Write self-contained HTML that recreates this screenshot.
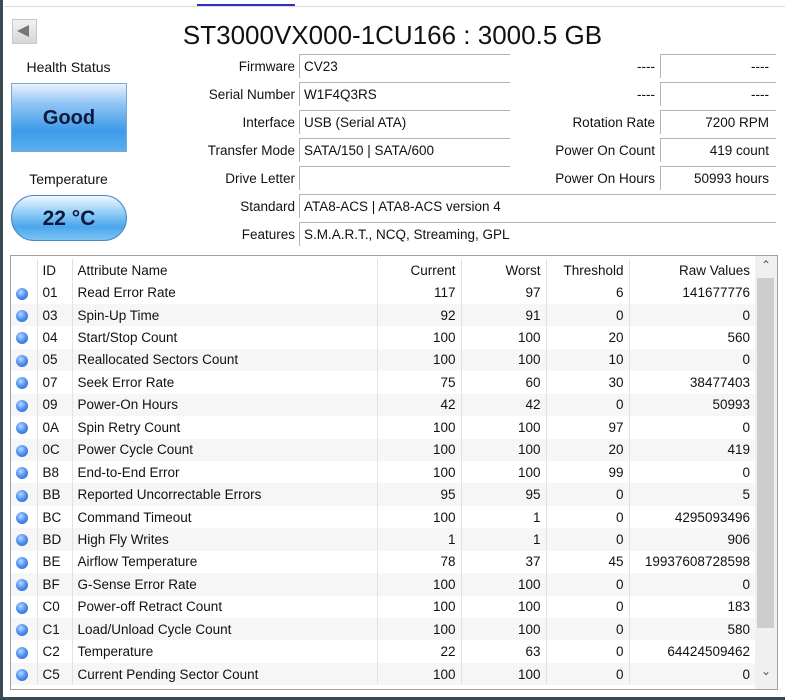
<!DOCTYPE html>
<html><head><meta charset="utf-8"><style>
*{margin:0;padding:0;box-sizing:border-box}
body{width:785px;height:700px;background:#fff;font-family:"Liberation Sans",sans-serif;font-size:13.5px;color:#111;position:relative;overflow:hidden}
.a{position:absolute;white-space:nowrap}
.lbl{text-align:right;line-height:24px}
.box{position:absolute;height:24px;border-top:1px solid #b4b4b4;border-left:1px solid #b4b4b4;line-height:24px;padding:0 4px;white-space:nowrap}
table{border-collapse:collapse;position:absolute;left:11px;top:259px;width:744px;table-layout:fixed}
td{height:22.45px;padding:0 5px;white-space:nowrap;border-left:1px solid #e2e2e2}
td:first-child{border-left:none}
tr:nth-child(odd) td{background:#f6f6f6}
tr.h td{background:#fff}
.r{text-align:right}
.dot{display:inline-block;width:12px;height:12px;border-radius:50%;background:radial-gradient(circle at 40% 35%,#b8d8ff 0,#4a8ef0 50%,#2a5cc8 100%);vertical-align:middle}
</style></head><body>
<div class="a" style="left:0;top:0;width:3px;height:700px;background:#3a4a55"></div>
<div class="a" style="left:0;top:697px;width:785px;height:3px;background:#3a4a55"></div>
<div class="a" style="left:197px;top:4px;width:98px;height:2px;background:#3030c0"></div>
<div class="a" style="left:4px;top:6px;width:781px;height:1px;background:#ddd"></div>
<div class="a" style="left:12px;top:19px;width:25px;height:25px;background:linear-gradient(#f2f2f2,#d6d6d6);border:1px solid #c8c8c8"></div>
<div class="a" style="left:17px;top:25px;width:0;height:0;border-top:6px solid transparent;border-bottom:6px solid transparent;border-right:12px solid #777"></div>
<div class="a" style="left:0;top:15px;width:785px;text-align:center;font-size:26px;line-height:40px">ST3000VX000-1CU166 : 3000.5 GB</div>
<div class="a" style="left:11px;top:59px;width:115px;text-align:center;font-size:14px">Health Status</div>
<div class="a" style="left:11px;top:83px;width:116px;height:69px;border:1px solid #7aa8d8;background:linear-gradient(#e8f2ff 0%,#8ec4f4 30%,#3c9ae8 70%,#5aaef0 100%);text-align:center;line-height:68px;font-weight:bold;font-size:20px;color:#0c1a3a">Good</div>
<div class="a" style="left:11px;top:171px;width:115px;text-align:center;font-size:14px">Temperature</div>
<div class="a" style="left:11px;top:195px;width:116px;height:46px;border-radius:23px;border:1px solid #4a88c8;background:linear-gradient(#f0f8ff 0%,#9ad0f8 35%,#4aa6ec 70%,#7cc4f4 100%);text-align:center;line-height:45px;font-weight:bold;font-size:21px;color:#0c1a3a">22 °C</div>

<div class="a lbl" style="left:150px;width:145px;top:55px">Firmware</div>
<div class="a lbl" style="left:150px;width:145px;top:83px">Serial Number</div>
<div class="a lbl" style="left:150px;width:145px;top:111px">Interface</div>
<div class="a lbl" style="left:150px;width:145px;top:139px">Transfer Mode</div>
<div class="a lbl" style="left:150px;width:145px;top:167px">Drive Letter</div>
<div class="a lbl" style="left:150px;width:145px;top:195px">Standard</div>
<div class="a lbl" style="left:150px;width:145px;top:223px">Features</div>
<div class="box" style="left:299px;top:54px;width:211px">CV23</div>
<div class="box" style="left:299px;top:82px;width:211px">W1F4Q3RS</div>
<div class="box" style="left:299px;top:110px;width:211px">USB (Serial ATA)</div>
<div class="box" style="left:299px;top:138px;width:211px">SATA/150 | SATA/600</div>
<div class="box" style="left:299px;top:166px;width:211px"></div>
<div class="box" style="left:299px;top:194px;width:477px">ATA8-ACS | ATA8-ACS version 4</div>
<div class="box" style="left:299px;top:222px;width:477px">S.M.A.R.T., NCQ, Streaming, GPL</div>

<div class="a lbl" style="left:500px;width:155px;top:55px">----</div>
<div class="a lbl" style="left:500px;width:155px;top:83px">----</div>
<div class="a lbl" style="left:500px;width:155px;top:111px">Rotation Rate</div>
<div class="a lbl" style="left:500px;width:155px;top:139px">Power On Count</div>
<div class="a lbl" style="left:500px;width:155px;top:167px">Power On Hours</div>
<div class="box r" style="left:660px;top:54px;width:116px;padding-right:7px">----</div>
<div class="box r" style="left:660px;top:82px;width:116px;padding-right:7px">----</div>
<div class="box r" style="left:660px;top:110px;width:116px;padding-right:7px">7200 RPM</div>
<div class="box r" style="left:660px;top:138px;width:116px;padding-right:7px">419 count</div>
<div class="box r" style="left:660px;top:166px;width:116px;padding-right:7px">50993 hours</div>

<div class="a" style="left:10px;top:255px;width:768px;height:435px;border:1px solid #a0a0a0"></div>
<div class="a" style="left:755px;top:256px;width:22px;height:433px;background:#f0f0f0"></div>
<div class="a" style="left:757px;top:278px;width:17px;height:350px;background:#cdcdcd"></div>
<div class="a" style="left:755px;top:258px;width:22px;text-align:center;font-size:12px;color:#555">&#8963;</div>
<div class="a" style="left:755px;top:664px;width:22px;text-align:center;font-size:12px;color:#555">&#8964;</div>
<table>
<colgroup><col style="width:26px"><col style="width:35px"><col style="width:305px"><col style="width:84px"><col style="width:85px"><col style="width:83px"><col style="width:126px"></colgroup>
<tr class="h"><td></td><td>ID</td><td>Attribute Name</td><td class="r">Current</td><td class="r">Worst</td><td class="r">Threshold</td><td class="r">Raw Values</td></tr>
<tr><td><span class="dot"></span></td><td>01</td><td>Read Error Rate</td><td class="r">117</td><td class="r">97</td><td class="r">6</td><td class="r">141677776</td></tr>
<tr><td><span class="dot"></span></td><td>03</td><td>Spin-Up Time</td><td class="r">92</td><td class="r">91</td><td class="r">0</td><td class="r">0</td></tr>
<tr><td><span class="dot"></span></td><td>04</td><td>Start/Stop Count</td><td class="r">100</td><td class="r">100</td><td class="r">20</td><td class="r">560</td></tr>
<tr><td><span class="dot"></span></td><td>05</td><td>Reallocated Sectors Count</td><td class="r">100</td><td class="r">100</td><td class="r">10</td><td class="r">0</td></tr>
<tr><td><span class="dot"></span></td><td>07</td><td>Seek Error Rate</td><td class="r">75</td><td class="r">60</td><td class="r">30</td><td class="r">38477403</td></tr>
<tr><td><span class="dot"></span></td><td>09</td><td>Power-On Hours</td><td class="r">42</td><td class="r">42</td><td class="r">0</td><td class="r">50993</td></tr>
<tr><td><span class="dot"></span></td><td>0A</td><td>Spin Retry Count</td><td class="r">100</td><td class="r">100</td><td class="r">97</td><td class="r">0</td></tr>
<tr><td><span class="dot"></span></td><td>0C</td><td>Power Cycle Count</td><td class="r">100</td><td class="r">100</td><td class="r">20</td><td class="r">419</td></tr>
<tr><td><span class="dot"></span></td><td>B8</td><td>End-to-End Error</td><td class="r">100</td><td class="r">100</td><td class="r">99</td><td class="r">0</td></tr>
<tr><td><span class="dot"></span></td><td>BB</td><td>Reported Uncorrectable Errors</td><td class="r">95</td><td class="r">95</td><td class="r">0</td><td class="r">5</td></tr>
<tr><td><span class="dot"></span></td><td>BC</td><td>Command Timeout</td><td class="r">100</td><td class="r">1</td><td class="r">0</td><td class="r">4295093496</td></tr>
<tr><td><span class="dot"></span></td><td>BD</td><td>High Fly Writes</td><td class="r">1</td><td class="r">1</td><td class="r">0</td><td class="r">906</td></tr>
<tr><td><span class="dot"></span></td><td>BE</td><td>Airflow Temperature</td><td class="r">78</td><td class="r">37</td><td class="r">45</td><td class="r">19937608728598</td></tr>
<tr><td><span class="dot"></span></td><td>BF</td><td>G-Sense Error Rate</td><td class="r">100</td><td class="r">100</td><td class="r">0</td><td class="r">0</td></tr>
<tr><td><span class="dot"></span></td><td>C0</td><td>Power-off Retract Count</td><td class="r">100</td><td class="r">100</td><td class="r">0</td><td class="r">183</td></tr>
<tr><td><span class="dot"></span></td><td>C1</td><td>Load/Unload Cycle Count</td><td class="r">100</td><td class="r">100</td><td class="r">0</td><td class="r">580</td></tr>
<tr><td><span class="dot"></span></td><td>C2</td><td>Temperature</td><td class="r">22</td><td class="r">63</td><td class="r">0</td><td class="r">64424509462</td></tr>
<tr><td><span class="dot"></span></td><td>C5</td><td>Current Pending Sector Count</td><td class="r">100</td><td class="r">100</td><td class="r">0</td><td class="r">0</td></tr>
</table>
</body></html>
